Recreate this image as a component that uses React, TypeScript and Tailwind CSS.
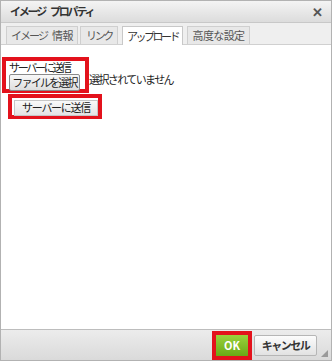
export default function App() {
  const tabs = [
    { a: "イメージ", b: "情報", w: "w-[72px]", tr: "tracking-[-2px]" },
    { a: "リンク", b: "", w: "w-[38px]", tr: "tracking-[-2.3px]" },
    { a: "アップロード", b: "", w: "w-[61px]", tr: "tracking-[-2.5px]" },
    { a: "高度な設定", b: "", w: "w-[63px]", tr: "tracking-[-0.6px]" },
  ];
  return (
    <div
      className="w-[332px] h-[361px] flex flex-col bg-white border border-[#b2b2b2] text-[11px] text-[#222] overflow-hidden whitespace-nowrap"
      style={{ fontFamily: '"Noto Sans CJK JP", "Noto Sans", sans-serif' }}
    >
      {/* title bar */}
      <div className="h-[22px] shrink-0 flex items-center justify-between pl-[9px] pr-[8px] bg-gradient-to-b from-[#f4f4f4] to-[#dcdcdc] border-b border-[#c8c8c8]">
        <span className="font-bold text-[11px] text-[#333] tracking-[-2.2px]">
          イメージ<span className="ml-[5px]">プロパティ</span>
        </span>
        <span className="text-[#555] font-bold text-[13px] leading-none">✕</span>
      </div>

      {/* tabs */}
      <div className="h-[22px] shrink-0 flex items-end pl-[5px] bg-[#efefef] border-b border-[#d0d0d0]">
        {tabs.map((tab, i) => (
          <div
            key={tab.a}
            className={`${tab.w} ${i === 1 ? "ml-[2px]" : i > 1 ? "ml-[4px]" : ""} ${
              i === 2
                ? "h-[19px] bg-white border-[#c8c8c8] -mb-px text-[#333]"
                : "h-[18px] bg-[#e8e8e8] border-[#cfcfcf] text-[#555]"
            } border border-b-0 flex items-center justify-center`}
          >
            <span className={tab.tr}>
              {tab.a}
              {tab.b && <span className="ml-[5px] tracking-[-0.5px]">{tab.b}</span>}
            </span>
          </div>
        ))}
      </div>

      {/* body */}
      <div className="flex-1 bg-white pl-[1px] pt-[12px]">
        <div className="flex items-end">
          <div className="w-[87px] h-[36px] border-[4px] border-[#e3121c] pl-[3px]">
            <div className="leading-[13px] tracking-[-2.3px]">サーバーに送信</div>
            <button className="h-[17px] w-[71px] leading-none border border-[#8a8a8a] rounded-[2px] bg-gradient-to-b from-[#f8f8f8] to-[#dedede] text-[11px]">
              <span className="tracking-[-1.8px]">ファイルを選択</span>
            </button>
          </div>
          <span className="mb-[6px] tracking-[-1.6px]">選択されていません</span>
        </div>
        <div className="mt-[1px] ml-[6px] w-[94px] h-[25px] border-[4px] border-[#e3121c] pl-[2px] pt-[1px]">
          <button className="w-[84px] h-[16px] leading-none border border-[#c6c6c6] bg-gradient-to-b from-[#fafafa] to-[#e4e4e4] text-[11px]">
            <span className="tracking-[-1.3px]">サーバーに送信</span>
          </button>
        </div>
      </div>

      {/* footer */}
      <div className="h-[31px] shrink-0 flex items-center justify-end bg-gradient-to-b from-[#ececec] to-[#dadada] border-t border-[#bdbdbd] pr-[14px] relative">
        <div className="border-[4px] border-[#e3121c] mr-[2px]">
          <div className="w-[32px] h-[21px] flex items-center justify-center bg-gradient-to-b from-[#9ad23c] to-[#6aaa14] text-white font-bold text-[11px]">
            OK
          </div>
        </div>
        <div className="w-[63px] h-[21px] flex items-center justify-center border border-[#b6b6b6] rounded-[2px] bg-gradient-to-b from-[#fcfcfc] to-[#e2e2e2] font-bold text-[11px] text-[#333]">
          <span className="tracking-[-1.5px]">キャンセル</span>
        </div>
        <svg className="absolute right-[3px] bottom-[3px]" width="7" height="7" viewBox="0 0 7 7">
          <path d="M7 0 L7 7 L0 7 Z" fill="#9a9a9a" />
        </svg>
      </div>
    </div>
  );
}
